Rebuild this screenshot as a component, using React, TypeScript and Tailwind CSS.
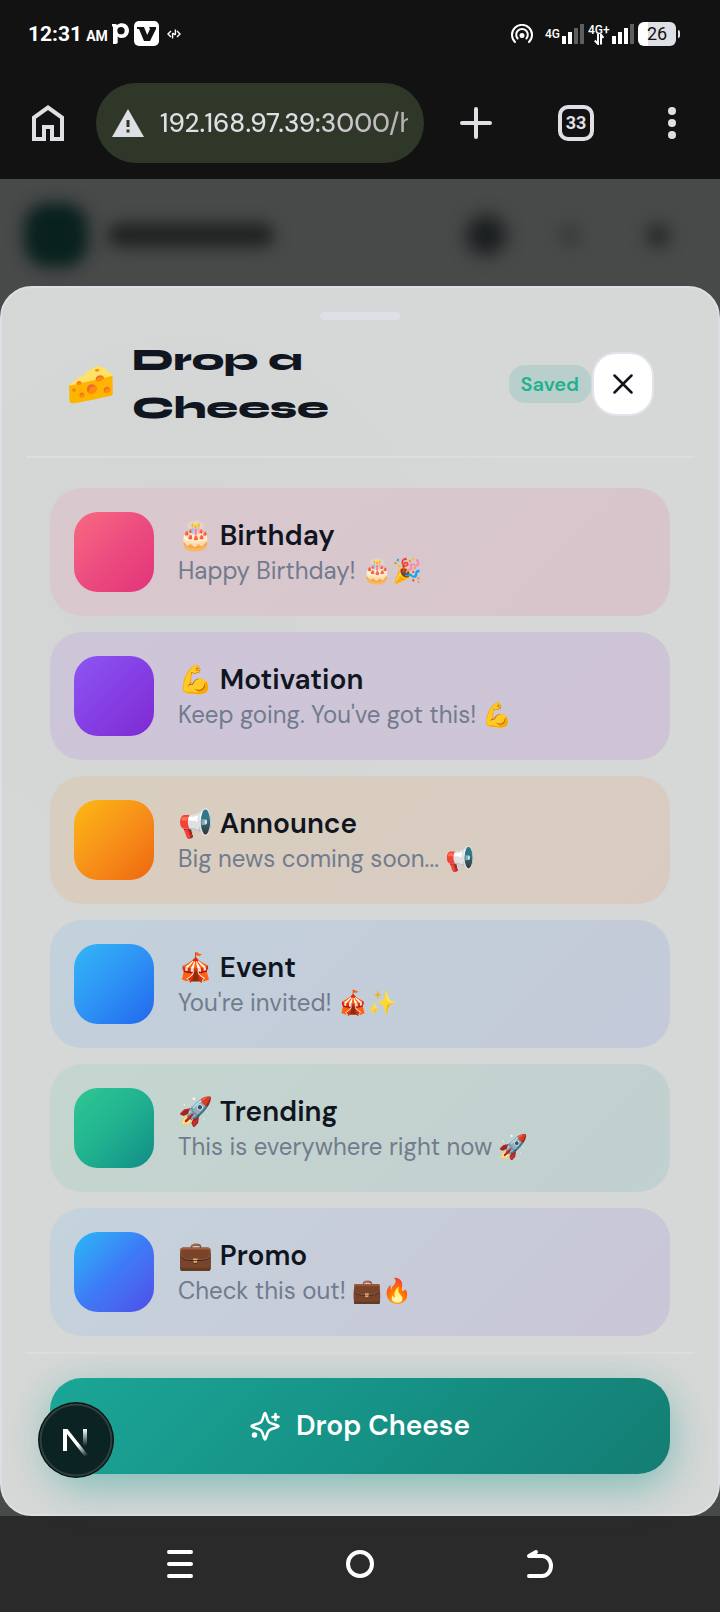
import React from "react";

type Template = {
  emoji: string;
  name: string;
  text: string;
  tail: string;
  card: string;
  tile: string;
};

const templates: Template[] = [
  { emoji: "🎂", name: "Birthday", text: "Happy Birthday!", tail: "🎂🎉", card: "from-[#d9c9cf] to-[#d7c5cb]", tile: "from-[#f76a80] via-[#ec4c7f] to-[#e2327a]" },
  { emoji: "💪", name: "Motivation", text: "Keep going. You've got this!", tail: "💪", card: "from-[#cdc6d8] to-[#cec4d6]", tile: "from-[#8d55f4] via-[#853fe4] to-[#7e2ad2]" },
  { emoji: "📢", name: "Announce", text: "Big news coming soon...", tail: "📢", card: "from-[#d8cebf] to-[#d9cbc1]", tile: "from-[#fcb814] via-[#f79119] to-[#ee6510]" },
  { emoji: "🎪", name: "Event", text: "You're invited!", tail: "🎪✨", card: "from-[#c2d1db] to-[#c4cad9]", tile: "from-[#34b6f6] via-[#2e92f5] to-[#2566ec]" },
  { emoji: "🚀", name: "Trending", text: "This is everywhere right now", tail: "🚀", card: "from-[#c5d5cf] to-[#c1d0d0]", tile: "from-[#2fc793] via-[#20b28f] to-[#128b86]" },
  { emoji: "💼", name: "Promo", text: "Check this out!", tail: "💼🔥", card: "from-[#c4d3dc] to-[#cac6d7]", tile: "from-[#29b8f6] via-[#3d7bf6] to-[#4f4ce8]" },
];

function SignalBars({ lit }: { lit: number }) {
  return (
    <svg width="22" height="20" viewBox="0 0 22 20" aria-hidden="true">
      {[0, 1, 2, 3].map((i) => (
        <rect key={i} x={i * 6} y={12 - i * 4} width="4" height={8 + i * 4} fill={i < lit ? "#fff" : "#5c5e60"} />
      ))}
    </svg>
  );
}

function StatusBar() {
  return (
    <div className="flex h-[67px] items-center justify-between pl-7 pr-10 font-[Roboto,sans-serif] text-white">
      <div className="flex items-center">
        <span className="text-[21px] font-bold leading-6">12:31</span>
        <span className="ml-1 mt-1 text-[14px] font-bold leading-5">AM</span>
        <svg className="ml-1" width="18" height="22" viewBox="0 0 18 22" aria-hidden="true">
          <path fill="#fff" fillRule="evenodd" d="M0 1h4l1 1c1.500-1.200 3-1.700 5-1.700 4 0 7 3.200 7 7.200s-3 7.500-7 7.500c-1.800 0-3.200-.6-4.300-1.600V20L4 21H1V3.500H0zM9 4a3.600 3.600 0 1 0 0 7.300A3.600 3.600 0 0 0 9 4z" />
        </svg>
        <svg className="ml-1" width="25" height="25" viewBox="0 0 25 25" aria-hidden="true">
          <rect width="25" height="25" rx="5" fill="#fff" />
          <path d="M3 6h7l3.200 8L16 8l-1-2h7v2l-6 12h-6L5 8H3z" fill="#121212" />
        </svg>
        <svg className="ml-2" width="14" height="12" viewBox="0 0 14 12" fill="none" stroke="#fff" strokeWidth="1.400" aria-hidden="true">
          <path d="M4 3 1 6l3 3M10 3l3 3-3 3M5.600 10.500V5M8.400 7V1.500M5.600 5l2.800 2" />
        </svg>
      </div>
      <div className="flex items-center">
        <svg width="22" height="20" viewBox="0 0 22 20" fill="none" stroke="#fff" strokeWidth="2" strokeLinecap="round" aria-hidden="true">
          <path d="M4 18a10 10 0 1 1 14 0" />
          <path d="M6.600 14.500a5.800 5.800 0 1 1 8.800 0" />
          <circle cx="11" cy="11.500" r="1.500" fill="#fff" />
        </svg>
        <span className="ml-3 text-[12px] font-medium leading-4">4G</span>
        <span className="ml-0.5 flex"><SignalBars lit={2} /></span>
        <span className="relative ml-1 h-5 w-6 text-[12px] font-medium leading-3">
          4G+
          <svg className="absolute left-1.5 top-2.5" width="10" height="11" viewBox="0 0 10 11" fill="none" stroke="#fff" strokeWidth="2" aria-hidden="true">
            <path d="M4 0v10L.8 6.500M7 10.500V.8L9.500 4" />
          </svg>
        </span>
        <span className="flex"><SignalBars lit={3} /></span>
        <span className="ml-1 flex h-6 w-[38px] items-center justify-center rounded-md bg-linear-to-r from-white from-25% to-[#dfdfe6] to-25% text-[18px] leading-6 text-[#121212]">26</span>
        <span className="ml-0.5 h-2 w-0.5 rounded-r bg-[#dfdfe6]" />
      </div>
    </div>
  );
}

function BrowserBar() {
  return (
    <div className="flex h-28 items-center justify-between pl-8 pr-11 text-[#dfdfe6]">
      <button type="button" aria-label="Home" className="shrink-0">
        <svg width="32" height="36" viewBox="0 0 32 36" fill="none" stroke="currentColor" strokeWidth="4" aria-hidden="true">
          <path d="M2 34V12.500L16 2.500l14 10V34H20V22h-8v12z" />
        </svg>
      </button>
      <div className="ml-8 flex h-20 min-w-0 flex-1 items-center rounded-full bg-[#2f3828] pl-4 pr-4">
        <svg className="shrink-0" width="32" height="28" viewBox="0 0 32 28" aria-hidden="true">
          <path d="M16 0 32 28H0z" fill="currentColor" />
          <path d="M14.500 11h3v7h-3zM14.500 20.500h3v3h-3z" fill="#2f3828" />
        </svg>
        <span className="ml-4 overflow-hidden whitespace-nowrap bg-linear-to-r from-[#dfdfe6] from-55% to-[#b3adb1] bg-clip-text font-['DM_Sans',Lato,sans-serif] text-[26px] font-medium leading-9 text-transparent">
          192.168.97.39:3000/h
        </span>
      </div>
      <button type="button" aria-label="New tab" className="ml-9 shrink-0">
        <svg width="32" height="32" viewBox="0 0 32 32" stroke="currentColor" strokeWidth="4" strokeLinecap="round" aria-hidden="true">
          <path d="M16 2v28M2 16h28" />
        </svg>
      </button>
      <button type="button" aria-label="Tabs" className="ml-[66px] flex h-9 w-9 shrink-0 items-center justify-center rounded-[10px] border-4 border-[#dfdfe6] font-[Roboto,sans-serif] text-[18px] font-bold leading-6">
        33
      </button>
      <button type="button" aria-label="Menu" className="ml-[74px] shrink-0">
        <svg width="8" height="32" viewBox="0 0 8 32" fill="currentColor" aria-hidden="true">
          <circle cx="4" cy="4" r="4" />
          <circle cx="4" cy="16" r="4" />
          <circle cx="4" cy="28" r="4" />
        </svg>
      </button>
    </div>
  );
}

function DimmedHeader() {
  return (
    <div aria-hidden="true" className="flex h-[107px] items-center pl-6 pr-[50px] pt-1">
      <div className="h-16 w-16 rounded-3xl bg-[#08211e] blur-[8px]" />
      <div className="ml-5 h-6 w-[166px] rounded-full bg-[#202121] blur-[8px]" />
      <div className="flex-1" />
      <div className="h-10 w-10 rounded-full bg-[#1a1e1f] blur-[9px]" />
      <div className="ml-[54px] h-5 w-5 rounded-full bg-[#353939] blur-[8px]" />
      <div className="ml-[66px] h-6 w-6 rounded-full bg-[#272b2b] blur-[8px]" />
    </div>
  );
}

function TemplateCard({ t }: { t: Template }) {
  return (
    <li>
      <button type="button" className={`flex w-full items-center rounded-[32px] bg-linear-135 p-6 text-left ${t.card}`}>
        <span className={`h-20 w-20 shrink-0 rounded-3xl bg-linear-to-br ${t.tile}`} />
        <span className="ml-6 flex min-w-0 flex-col pt-1">
          <span className="text-[28px] font-semibold leading-[34px] text-[#10151f]">{t.emoji} {t.name}</span>
          <span className="text-[24px] leading-9 text-[#717b8d]">{t.text} {t.tail}</span>
        </span>
      </button>
    </li>
  );
}

function NextBadge() {
  return (
    <button type="button" aria-label="Open developer tools" className="absolute bottom-9 left-9 h-[76px] w-[76px]">
      <svg viewBox="0 0 76 76" width="76" height="76" aria-hidden="true">
        <defs>
          <linearGradient id="stem" x1="0" y1="0" x2="0" y2="1">
            <stop offset="0" stopColor="#fff" />
            <stop offset="1" stopColor="#fff" stopOpacity="0" />
          </linearGradient>
          <linearGradient id="slash" gradientUnits="userSpaceOnUse" x1="40" y1="43" x2="49" y2="54">
            <stop offset="0" stopColor="#fff" />
            <stop offset="1" stopColor="#fff" stopOpacity="0" />
          </linearGradient>
        </defs>
        <circle cx="38" cy="38" r="38" fill="#0b1213" />
        <circle cx="38" cy="38" r="35.500" fill="#0b2423" stroke="#304040" strokeWidth="2" />
        <path d="M25 27h4.500L50 53l-3 2L29 32v17h-4z" fill="url(#slash)" />
        <rect x="45" y="27" width="4" height="17" fill="url(#stem)" />
      </svg>
    </button>
  );
}

function Sheet() {
  return (
    <section
      aria-labelledby="sheet-title"
      className="relative rounded-[32px] border-2 border-[#dedee7] bg-[#d6d8d7] bg-[radial-gradient(circle_at_25%_25%,#d1d5d4,#d6d8d7_35%)] px-6 pt-6 font-['DM_Sans',Lato,'Noto_Color_Emoji',sans-serif]"
    >
      <div className="mx-auto h-2 w-20 rounded-full bg-[#dedfe7]" />
      <header className="flex items-center border-b-2 border-[#dcdddf] px-10 pb-6 pt-4">
        <span className="w-[50px] text-[40px] leading-[48px]">🧀</span>
        <h1 id="sheet-title" className="ml-4 flex-1 font-['Syne','DejaVu_Sans',sans-serif] text-[32px] font-extrabold leading-[48px] text-[#10151f]">
          Drop a<br />Cheese
        </h1>
        <span className="rounded-2xl bg-[#b8cfcb] px-3 py-1.5 text-[20px] font-semibold leading-[26px] text-[#20b28f]">Saved</span>
        <button type="button" aria-label="Close" className="ml-px flex h-16 w-[62px] items-center justify-center rounded-3xl border-2 border-[#e2e2ea] bg-white">
          <svg width="20" height="20" viewBox="0 0 20 20" stroke="#10151f" strokeWidth="2.500" strokeLinecap="round" aria-hidden="true">
            <path d="m1.500 1.500 17 17M18.500 1.500l-17 17" />
          </svg>
        </button>
      </header>
      <ul className="flex flex-col gap-4 px-6 pb-4 pt-[30px]">
        {templates.map((t) => (
          <TemplateCard key={t.name} t={t} />
        ))}
      </ul>
      <footer className="border-t-2 border-[#dcdce2] px-6 pb-10 pt-6">
        <button
          type="button"
          className="flex h-24 w-full items-center justify-center rounded-[32px] bg-linear-135 from-[#1ba698] via-[#169286] to-[#147d73] text-[28px] font-semibold text-white shadow-[0_12px_40px_rgba(20,155,142,0.45)]"
        >
          <svg width="30" height="30" viewBox="0 0 30 30" fill="none" stroke="currentColor" strokeWidth="2.500" strokeLinecap="round" strokeLinejoin="round" aria-hidden="true">
            <path d="M15 2c1.300 0 1.400 5.800 3.600 8.700C21 13.600 28.500 13.600 28.500 15.300S21 17 18.600 19.900C16.400 22.800 16.300 28.500 15 28.500s-1.400-5.700-3.600-8.600C9 17 1.500 17 1.500 15.300S9 13.600 11.400 10.700C13.600 7.800 13.700 2 15 2z" />
            <path d="M25.500 3v6M22.500 6h6" />
            <circle cx="4.500" cy="24" r="1.500" fill="currentColor" />
          </svg>
          <span className="ml-4">Drop Cheese</span>
        </button>
      </footer>
      <NextBadge />
    </section>
  );
}

function SystemNav() {
  return (
    <nav aria-label="System" className="flex h-24 items-center justify-around bg-[#2a2a2a] px-[90px] text-white">
      <button type="button" aria-label="Recent apps">
        <svg width="28" height="30" viewBox="0 0 28 30" stroke="currentColor" strokeWidth="4" strokeLinecap="round" aria-hidden="true">
          <path d="M3 3h22M3 15h22M3 27h22" />
        </svg>
      </button>
      <button type="button" aria-label="Home screen">
        <svg width="30" height="30" viewBox="0 0 30 30" fill="none" stroke="currentColor" strokeWidth="4" aria-hidden="true">
          <circle cx="15" cy="15" r="12" />
        </svg>
      </button>
      <button type="button" aria-label="Back">
        <svg width="28" height="30" viewBox="0 0 28 30" fill="none" stroke="currentColor" strokeWidth="4" strokeLinecap="round" strokeLinejoin="round" aria-hidden="true">
          <path d="M10 3 3 7h13a9 10 0 0 1 0 20H3" />
        </svg>
      </button>
    </nav>
  );
}

export default function App() {
  return (
    <div className="flex min-h-screen flex-col bg-[#121212]">
      <StatusBar />
      <BrowserBar />
      <main className="bg-[#484949]">
        <DimmedHeader />
        <Sheet />
      </main>
      <SystemNav />
    </div>
  );
}
